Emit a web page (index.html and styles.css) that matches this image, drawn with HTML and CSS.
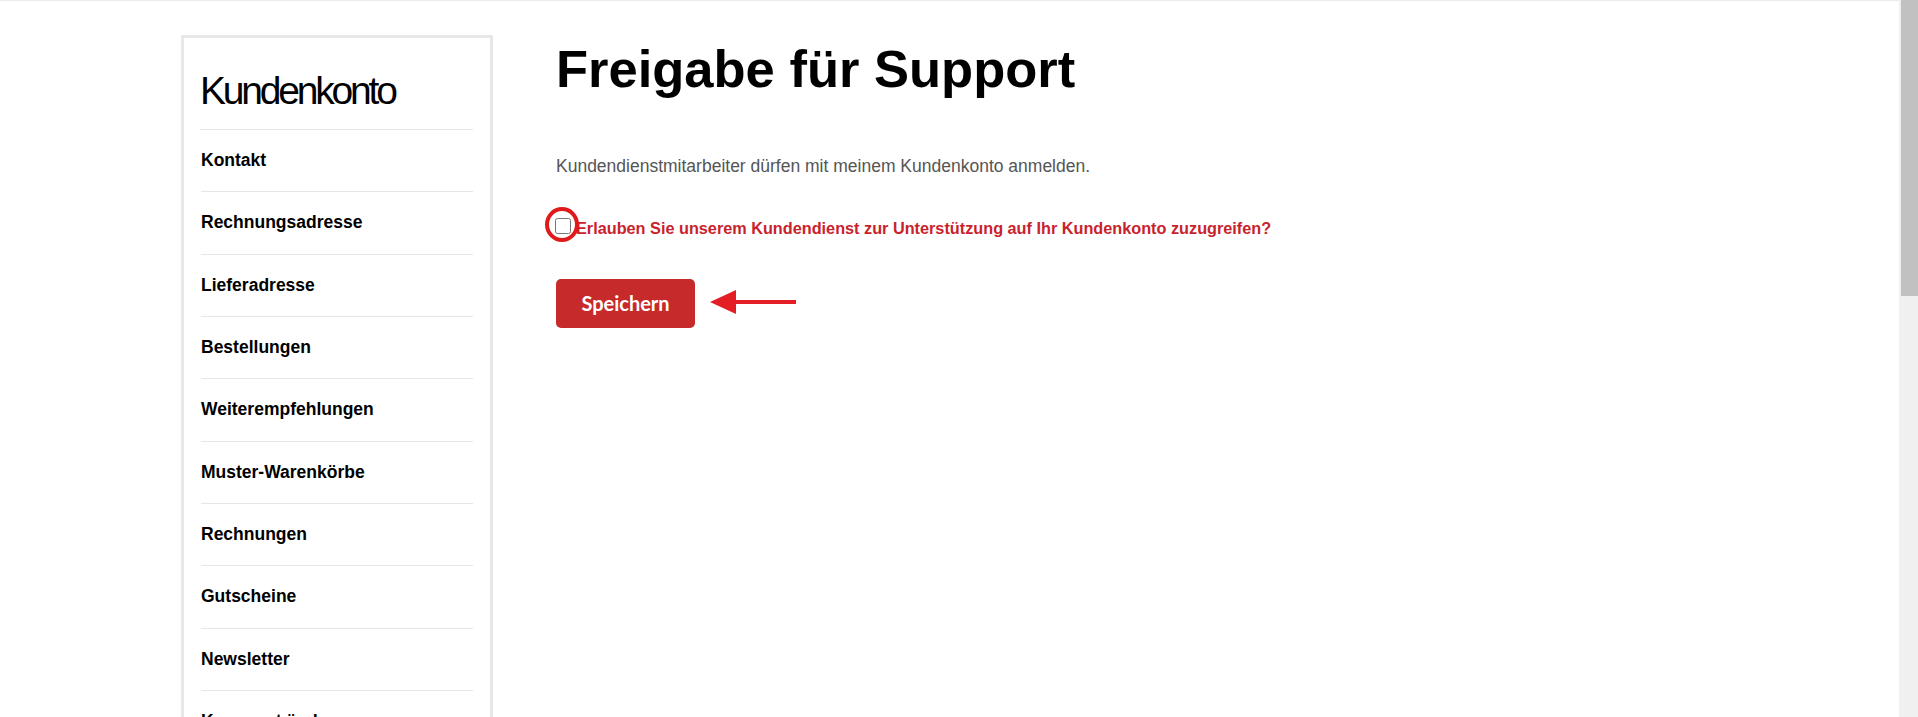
FILE: index.html
```html
<!DOCTYPE html>
<html lang="de">
<head>
<meta charset="utf-8">
<title>Freigabe für Support</title>
<link rel="stylesheet" href="styles.css">
</head>
<body>
<div class="viewport">
  <div class="page">
    <div class="container">
      <aside class="sidebar">
        <h2 class="sidebar-title">Kundenkonto</h2>
        <ul class="nav">
          <li class="nav-item">Kontakt</li>
          <li class="nav-item">Rechnungsadresse</li>
          <li class="nav-item">Lieferadresse</li>
          <li class="nav-item">Bestellungen</li>
          <li class="nav-item">Weiterempfehlungen</li>
          <li class="nav-item">Muster-Warenkörbe</li>
          <li class="nav-item">Rechnungen</li>
          <li class="nav-item">Gutscheine</li>
          <li class="nav-item">Newsletter</li>
          <li class="nav-item">Kennwort ändern</li>
          <li class="nav-item">Freigabe für Support</li>
          <li class="nav-item">Abmelden</li>
        </ul>
      </aside>
      <main class="main">
        <h1 class="title">Freigabe für Support</h1>
        <p class="intro">Kundendienstmitarbeiter dürfen mit meinem Kundenkonto anmelden.</p>
        <label class="consent">
          <span class="check-wrap">
            <input type="checkbox" class="check">
            <span class="ring"></span>
          </span>
          <span class="consent-text">Erlauben Sie unserem Kundendienst zur Unterstützung auf Ihr Kundenkonto zuzugreifen?</span>
        </label>
        <div class="actions">
          <button class="btn" type="button">Speichern</button>
          <svg class="arrow" width="86" height="26" viewBox="0 0 86 26" aria-hidden="true">
            <rect x="22" y="11" width="64" height="4" fill="#e31e24"/>
            <polygon points="0,13 26,1 26,25" fill="#e31e24"/>
          </svg>
        </div>
      </main>
    </div>
  </div>
  <div class="scrollbar">
    <div class="thumb"></div>
  </div>
</div>
</body>
</html>
```

FILE: styles.css
```css
html, body {
  margin: 0;
  padding: 0;
  height: 717px;
  overflow: hidden;
  background: #fff;
  font-family: "Liberation Sans", Arial, sans-serif;
  color: #000;
}

.viewport {
  display: flex;
  height: 717px;
  overflow: hidden;
}

.page {
  flex: 1;
  border-top: 1px solid #ebebeb;
  overflow: hidden;
}

.container {
  width: 1537px;
  margin: 0 auto;
  padding-top: 34px;
  display: flex;
  align-items: flex-start;
  gap: 63px;
}

.sidebar {
  width: 312px;
  flex: none;
  border: 3px solid #e8e8e8;
  padding: 0 17px;
  box-sizing: border-box;
}

.sidebar-title {
  margin: 0 0 0 -1px;
  padding: 30px 0 16px;
  font-size: 39px;
  line-height: 45px;
  font-weight: 400;
  letter-spacing: -3.2px;
  border-bottom: 1px solid #e6e6e6;
}

.nav {
  list-style: none;
  margin: 0;
  padding: 0;
}

.nav-item {
  height: 61.33px;
  line-height: 61.33px;
  font-size: 17.5px;
  font-weight: 700;
  border-bottom: 1px solid #e6e6e6;
  white-space: nowrap;
}

.main {
  flex: 1;
}

.title {
  margin: 4.3px 0 0;
  font-size: 52.5px;
  line-height: 60px;
  font-weight: 700;
}

.intro {
  margin: 54.8px 0 0;
  font-size: 17.5px;
  line-height: 25px;
  color: #555;
}

.consent {
  display: flex;
  align-items: flex-start;
  margin-top: 37px;
  font-size: 16.25px;
  line-height: 25px;
}

.check-wrap {
  position: relative;
  display: block;
  width: 16px;
  height: 16px;
  margin: 2px 5px 0 -1px;
}

.check {
  display: block;
  width: 16px;
  height: 16px;
  margin: 0;
}

.ring {
  position: absolute;
  left: -10px;
  top: -11px;
  width: 26px;
  height: 27px;
  border: 4px solid #e01a1a;
  border-radius: 50%;
}

.consent-text {
  font-weight: 700;
  color: #c8232c;
}

.actions {
  display: flex;
  align-items: center;
  gap: 15px;
  margin-top: 37.7px;
}

.btn {
  width: 139px;
  height: 49.4px;
  border: 0;
  border-radius: 5px;
  background: #c62a2a;
  color: #fff;
  font-family: Lato, "Open Sans", sans-serif;
  font-weight: 700;
  font-size: 20px;
  padding: 0;
}

.arrow {
  display: block;
  margin-top: -2px;
}

.scrollbar {
  width: 19px;
  flex: none;
  background: #f0f0f0;
}

.thumb {
  margin-left: 2px;
  height: 296px;
  background: #c1c1c1;
}
```
